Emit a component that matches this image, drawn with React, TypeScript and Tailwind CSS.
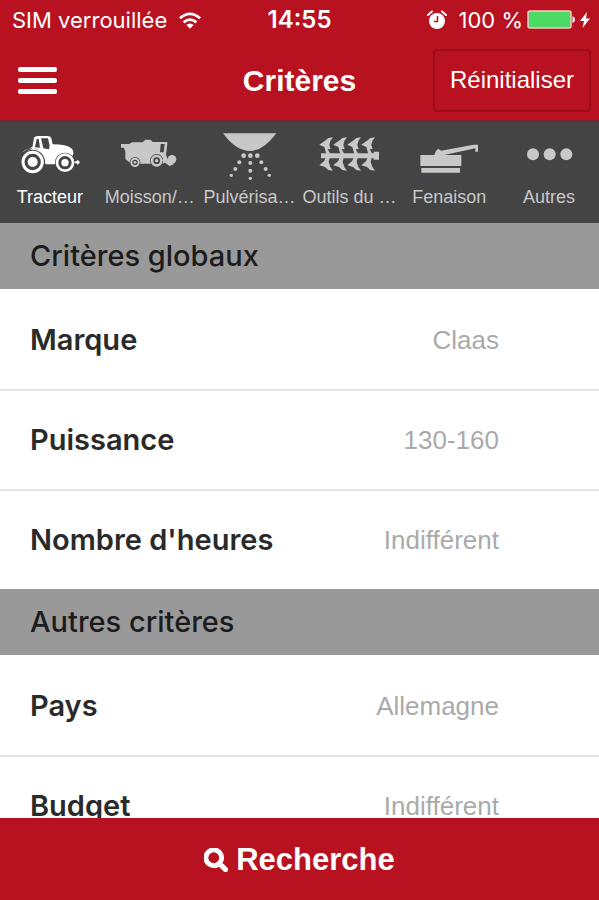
import type { ReactNode } from 'react';
import { FaSearch } from 'react-icons/fa';

function TractorIcon() {
  return (
    <svg viewBox="0 0 180 150" className="h-[50px] w-[60px]" fill="currentColor">
      <path d="M36 50 L42 14 Q44 9 54 9 H82 Q92 9 94 16 L98 34 Q140 34 154 46 Q160 52 160 62 L150 92 H20 L14 62 Q24 50 36 48 Z" />
      <path d="M50 19 L56 17 L60 44 L54 50 L44 46 Z M63 16 H84 L89 38 L86 54 H72 Z" fill="#444" />
      <circle cx="38" cy="87" r="37" fill="#444" />
      <circle cx="38" cy="87" r="29" fill="none" stroke="currentColor" strokeWidth="9" />
      <circle cx="38" cy="87" r="15" />
      <path d="M6 58 Q22 44 44 46 Q66 50 76 70 L78 94 H104 Q106 62 134 58 Q150 57 160 62 L158 50 H96 L60 44 L36 42 Z" />
      <circle cx="135" cy="89" r="30" fill="#444" />
      <circle cx="135" cy="89" r="24" fill="none" stroke="currentColor" strokeWidth="8" />
      <circle cx="135" cy="89" r="11" />
      <path d="M164 85 H170 L173 80 L180 88 L173 96 L170 91 H164 Z" />
    </svg>
  );
}

function HarvesterIcon() {
  return (
    <svg viewBox="0 0 180 150" className="h-[50px] w-[60px]" fill="currentColor">
      <path d="M3 33 H28 L36 28 H68 L76 20 H92 L98 27 H142 V33 L138 66 L146 84 L128 92 H34 L16 78 V56 L12 44 H3 Z" />
      <path d="M122 33 H134 L131 58 H120 Z" fill="#444" />
      <circle cx="45" cy="88" r="16" fill="#444" />
      <circle cx="45" cy="88" r="11" fill="none" stroke="currentColor" strokeWidth="6" />
      <circle cx="45" cy="88" r="4" />
      <circle cx="110" cy="83" r="20" fill="#444" />
      <circle cx="110" cy="83" r="14" fill="none" stroke="currentColor" strokeWidth="8" />
      <circle cx="110" cy="83" r="5" />
      <path d="M132 74 L162 94 L148 99 L126 82 Z" />
      <circle cx="156" cy="79" r="13" />
    </svg>
  );
}

function SprayerIcon() {
  return (
    <svg viewBox="0 0 180 150" className="h-[50px] w-[60px]" fill="currentColor">
      <path d="M9 1 H169 Q130 54 90 54 Q48 54 9 1 Z" />
      <circle cx="71" cy="68" r="7" />
      <circle cx="91" cy="68" r="7" />
      <circle cx="112" cy="68" r="7" />
      <circle cx="58" cy="88" r="6" />
      <circle cx="91" cy="90" r="6" />
      <circle cx="124" cy="88" r="6" />
      <circle cx="46" cy="108" r="6" />
      <circle cx="91" cy="113" r="6" />
      <circle cx="137" cy="108" r="6" />
      <circle cx="34" cy="127" r="5" />
      <circle cx="91" cy="136" r="5" />
      <circle cx="148" cy="127" r="5" />
    </svg>
  );
}

function PloughIcon() {
  return (
    <svg viewBox="0 0 180 150" className="h-[50px] w-[60px]" fill="currentColor">
      <path d="M6 61 H164 V56 H180 V80 H164 V76 H6 Z" />
      {[0, 42, 84, 126].map((x) => (
        <g key={x} transform={`translate(${x} 0)`}>
          <path d="M1 35 L20 22 L28 15 L42 13 L34 24 L31 36 L35 48 L26 49 L34 63 H22 L16 42 Z" />
          <path d="M1 97 L15 85 L20 74 H32 L29 86 L34 102 L42 113 L28 111 L18 102 Z" />
        </g>
      ))}
    </svg>
  );
}

function BalerIcon() {
  return (
    <svg viewBox="0 0 180 150" className="h-[50px] w-[60px]" fill="currentColor">
      <path d="M4 66 H46 L51 53 L58 47 L66 53 L164 35 H177 V56 H169 V46 L76 66 H127 V99 H4 Z" />
      <path d="M7 105 H123 V119 H7 Z" />
    </svg>
  );
}

function MoreIcon() {
  return (
    <svg viewBox="0 0 180 150" className="h-[50px] w-[60px]" fill="currentColor">
      <circle cx="42" cy="64" r="18" />
      <circle cx="92" cy="64" r="18" />
      <circle cx="142" cy="64" r="18" />
    </svg>
  );
}

const categories: { label: string; icon: ReactNode }[] = [
  { label: 'Tracteur', icon: <TractorIcon /> },
  { label: 'Moisson/…', icon: <HarvesterIcon /> },
  { label: 'Pulvérisa…', icon: <SprayerIcon /> },
  { label: 'Outils du …', icon: <PloughIcon /> },
  { label: 'Fenaison', icon: <BalerIcon /> },
  { label: 'Autres', icon: <MoreIcon /> },
];

const sections = [
  {
    title: 'Critères globaux',
    rows: [
      { label: 'Marque', value: 'Claas' },
      { label: 'Puissance', value: '130-160' },
      { label: "Nombre d'heures", value: 'Indifférent' },
    ],
  },
  {
    title: 'Autres critères',
    rows: [
      { label: 'Pays', value: 'Allemagne' },
      { label: 'Budget', value: 'Indifférent' },
    ],
  },
];

function StatusBar() {
  return (
    <div className="grid h-10 grid-cols-[1fr_auto_1fr] items-center px-2 font-['Inter',sans-serif] text-[22px] leading-none">
      <div className="flex items-center gap-3 pl-1">
        <span>SIM verrouillée</span>
        <svg viewBox="0 0 24 18" className="h-[17px] w-[22px]" fill="none" stroke="currentColor" strokeWidth="3">
          <path d="M1 6.5 Q12 -3 23 6.5" />
          <path d="M5 11 Q12 5 19 11" />
          <path d="M8 14 Q12 10.500 16 14 L12 18 Z" fill="currentColor" stroke="none" />
        </svg>
      </div>
      <span className="text-2xl leading-none font-semibold">14:55</span>
      <div className="flex items-center justify-end gap-1">
        <svg viewBox="0 0 20 20" className="mr-2 size-5">
          <circle cx="10" cy="11" r="8" fill="currentColor" />
          <path d="M1 5 L5 1.500 M19 5 L15 1.500" stroke="currentColor" strokeWidth="2" strokeLinecap="round" />
          <path d="M10.500 6 V11.500 H7" fill="none" stroke="#b81120" strokeWidth="1.500" />
        </svg>
        <span>100 %</span>
        <svg viewBox="0 0 48 20" className="h-5 w-12">
          <rect x="1" y="1" width="43" height="17" rx="2" fill="#4cd964" stroke="#f6c9c4" strokeWidth="1.500" />
          <path d="M45.500 6 Q48 7 48 9.500 Q48 12 45.500 13 Z" fill="currentColor" />
        </svg>
        <svg viewBox="0 0 12 18" className="h-[18px] w-3" fill="currentColor">
          <path d="M8 1 L1 10 H5 L3.500 17 L11 7.500 H7 Z" />
        </svg>
      </div>
    </div>
  );
}

export default function App() {
  return (
    <div className="flex h-screen flex-col bg-white font-['Liberation_Sans',Arial,sans-serif]">
      <header className="shrink-0 bg-[#b81120] text-white">
        <StatusBar />
        <div className="grid h-20 grid-cols-[1fr_auto_1fr] items-center px-2">
          <button aria-label="Menu" className="ml-2.5 flex w-[39px] flex-col gap-1.5 justify-self-start">
            <span className="h-[5px] rounded-xs bg-white" />
            <span className="h-[5px] rounded-xs bg-white" />
            <span className="h-[5px] rounded-xs bg-white" />
          </button>
          <h1 className="text-[30px] font-bold">Critères</h1>
          <button className="h-[63px] justify-self-end rounded-sm border-2 border-[#9d0e1b] px-[15px] text-2xl">
            Réinitialiser
          </button>
        </div>
      </header>

      <nav className="grid h-[103px] shrink-0 grid-cols-6 border-t-2 border-[#702530] bg-[#444]">
        {categories.map((category, index) => (
          <button
            key={category.label}
            className={`flex flex-col items-center gap-1 pt-[11px] text-lg leading-5 whitespace-nowrap ${
              index === 0 ? 'text-white' : 'text-[#c8c8c8]'
            }`}
          >
            {category.icon}
            {category.label}
          </button>
        ))}
      </nav>

      <main className="min-h-0 flex-1 overflow-y-auto [scrollbar-width:none]">
        {sections.map((section) => (
          <section key={section.title}>
            <h2 className="flex h-[66px] items-center bg-[#999] px-[30px] font-['Inter',sans-serif] text-[29px] font-medium text-[#1c1c1c]">
              {section.title}
            </h2>
            {section.rows.map((row) => (
              <button
                key={row.label}
                className="flex h-[100px] w-full items-center justify-between border-t-2 border-[#e2e2e2] pr-[100px] pl-[30px] first-of-type:border-white"
              >
                <span className="font-['Inter',sans-serif] text-[29px] font-semibold text-[#2a2a2a]">
                  {row.label}
                </span>
                <span className="text-[26px] text-[#aaa]">{row.value}</span>
              </button>
            ))}
          </section>
        ))}
      </main>

      <button className="flex h-[82px] shrink-0 items-center justify-center gap-2 bg-[#b81120] pt-0.5 text-[31px] font-bold text-white">
        <FaSearch className="size-6 stroke-current stroke-[24]" />
        Recherche
      </button>
    </div>
  );
}
